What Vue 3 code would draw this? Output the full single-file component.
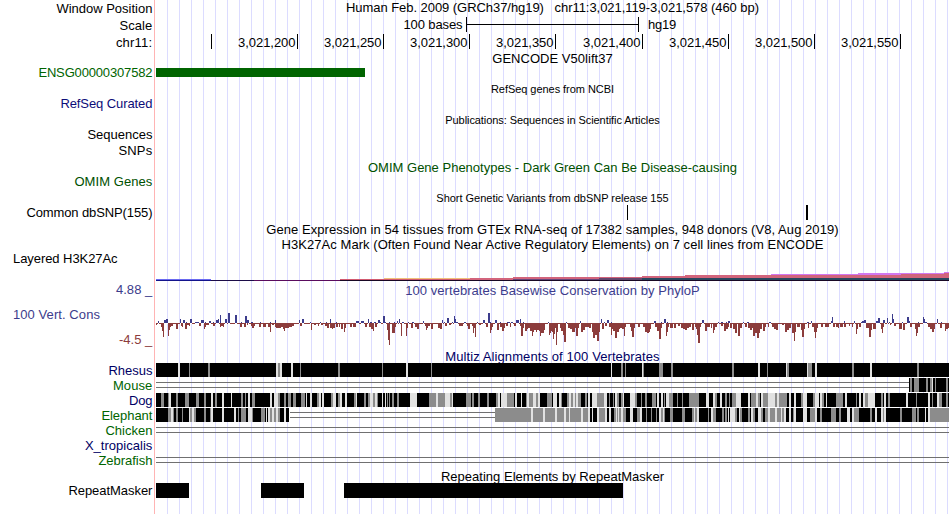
<template>
  <div class="browser">
    <div v-for="(row, i) in rows" :key="i" class="row" :style="{ height: row.h + 'px' }">

      <!-- Left labels -->
      <div class="side" :class="row.side">
        <span
          v-for="label in row.labels"
          :key="label.text"
          :style="{ color: label.color, letterSpacing: fit(label.text, label.w) }"
        >{{ label.text }}</span>
      </div>

      <!-- Track area -->
      <div class="plot">
        <div
          v-if="row.title"
          class="title"
          :class="{ small: row.small, low: row.low }"
          :style="{ color: row.color, letterSpacing: fit(row.title, row.w, row.small ? 11 : 13) }"
        >{{ row.title }}</div>

        <svg v-if="row.kind === 'scale'" width="793" height="17">
          <text x="306.5" y="12" text-anchor="end" :style="{ letterSpacing: fit('100 bases', 59) }">100 bases</text>
          <path d="M310 0h1v15h-1zM482 0h1v15h-1zM310 7h173v1h-173z" />
          <text x="492" y="12" :style="{ letterSpacing: fit('hg19', 28) }">hg19</text>
        </svg>

        <svg v-if="row.kind === 'ruler'" width="793" height="17">
          <g v-for="tick in ticks" :key="tick.x">
            <text
              v-if="tick.text"
              :x="tick.x - 1.5"
              y="13"
              text-anchor="end"
              :style="{ letterSpacing: fit(tick.text, 57.5) }"
            >{{ tick.text }}</text>
            <rect :x="tick.x" y="0" width="1" height="15" />
          </g>
        </svg>

        <svg v-if="row.kind === 'blocks'" width="793" :height="row.h">
          <rect
            v-for="b in row.blocks"
            :key="b[0]"
            :x="b[0]"
            :y="row.y"
            :width="b[1]"
            :height="row.size"
            :fill="row.fill"
          />
        </svg>

        <svg v-if="row.kind === 'layered'" width="793" height="31">
          <rect v-for="(s, n) in h3k27ac" :key="n" :x="s[0]" :y="s[1]" :width="s[2]" :height="s[3]" :fill="s[4]" />
        </svg>

        <svg v-if="row.kind === 'phylop'" width="793" height="51">
          <rect x="0" y="25" width="793" height="1" fill="#8c3c3c" />
          <rect v-for="b in conserved" :key="'u' + b[0]" :x="b[0]" :y="25 - b[2]" :width="b[1]" :height="b[2]" fill="#3c3c8c" />
          <rect v-for="b in conserved" :key="'z' + b[0]" :x="b[0]" y="25" :width="b[1]" height="1" fill="#fff" />
          <rect v-for="b in accelerated" :key="'d' + b[0]" :x="b[0]" y="25" :width="b[1]" :height="b[2] + 1" fill="#8c3c3c" />
        </svg>

        <svg v-if="row.kind === 'align'" width="793" height="15">
          <g v-for="g in row.gaps" :key="'g' + g[0]" fill="#707070">
            <rect :x="g[0]" y="4" :width="g[1]" height="1" />
            <rect :x="g[0]" y="9" :width="g[1]" height="1" />
          </g>
          <rect v-for="s in row.solid" :key="'s' + s[0]" :x="s[0]" y="0" :width="s[1]" height="14" :fill="s[2] || '#000'" />
          <rect v-for="s in row.stripes" :key="'p' + s.x" :x="s.x" y="0" :width="s.w" height="14" :fill="s.fill" />
        </svg>
      </div>
    </div>
  </div>
</template>

<script setup>
const GREEN = '#006400';
const OMIM = '#005000';
const NAVY = '#000064';
const BLUE = '#0c0c78';
const WIG_UP = '#3c3c8c';
const WIG_DOWN = '#8c3c3c';

// spread a string over a fixed pixel width
const ctx = document.createElement('canvas').getContext('2d');
const fit = (text, width, size = 13) => {
  if (!width) return 'normal';
  ctx.font = `${size}px "Liberation Sans"`;
  return ((width - ctx.measureText(text).width) / text.length).toFixed(3) + 'px';
};

const triples = (s) => s.trim().split(/\s+/).map((t) => t.split(',').map(Number));

// g = weak alignment, l = very weak alignment
const stripes = (s) => s.trim().split(/\s+/).map((t) => {
  const [x, w] = t.slice(1).split(',').map(Number);
  return { x, w, fill: t[0] === 'g' ? '#8c8c8c' : '#e1e1e1' };
});

const ticks = [
  { x: 55 },
  { x: 141, text: '3,021,200' },
  { x: 227, text: '3,021,250' },
  { x: 313, text: '3,021,300' },
  { x: 399, text: '3,021,350' },
  { x: 486, text: '3,021,400' },
  { x: 572, text: '3,021,450' },
  { x: 658, text: '3,021,500' },
  { x: 744, text: '3,021,550' }
];

// x, y, width, height, colour
const h3k27ac = [
  [0, 28, 55, 1, '#6a6af0'],
  [0, 29, 55, 1, '#14148c'],
  [55, 29, 43, 1, '#1c0c48'],
  [98, 29, 86, 1, '#5a0c5e'],
  [184, 28, 173, 1, '#d25a70'],
  [228, 27, 86, 1, '#f0c07c'],
  [314, 27, 43, 2, '#d2647c'],
  [357, 26, 129, 2, '#d2647c'],
  [357, 28, 86, 1, '#64467c'],
  [443, 27, 43, 2, '#64466e'],
  [486, 25, 43, 2, '#d2647c'],
  [529, 24, 264, 3, '#d2647c'],
  [486, 27, 307, 2, '#28465f'],
  [615, 23, 87, 1, '#d278f0'],
  [702, 22, 43, 2, '#d278f0'],
  [745, 22, 43, 1, '#d278f0'],
  [745, 23, 48, 1, '#d2647c'],
  [788, 21, 5, 1, '#d278f0'],
  [788, 22, 5, 1, '#d2647c'],
  [184, 29, 609, 1, '#180824']
];

// x, width, height
const conserved = triples(`
  2,1,2 8,2,3 10,2,4 24,1,4 27,2,3 30,1,1 34,2,4 39,4,1 45,3,3 49,1,1 53,2,2 57,1,1 60,2,3 62,1,4
  64,1,8 69,2,4 72,2,10 79,2,8 85,1,1 89,2,7 91,2,3 95,2,1 104,1,1 114,1,1 119,1,3 143,1,3 146,2,4
  154,1,1 164,1,1 170,1,1 174,1,4 180,1,1 200,3,2 205,3,2 212,1,4 214,2,1 218,2,1 222,2,3 224,1,1
  227,2,7 229,1,1 233,1,1 238,1,1 241,1,2 243,1,4 246,2,1 252,1,1 256,2,1
  267,1,2 286,1,3 288,1,1 291,2,5 296,1,1 298,1,7 299,1,4 300,2,1 308,2,1 321,1,1 327,2,3 332,2,10
  334,1,1 339,2,3 344,1,1 351,3,1 355,2,1 360,2,3 362,1,3 364,1,4 367,1,1 392,1,1 410,1,1 424,1,2
  445,1,4 448,1,1 451,2,3 455,1,1 498,2,2 505,1,1 508,2,4 511,1,1
  546,2,3 562,1,1 565,2,1 570,1,1 572,2,2 587,1,1 591,2,1 613,2,1 651,2,1 655,1,2 675,1,2 676,1,6
  688,1,2 698,1,2 705,1,1 706,2,2 708,2,3 720,2,2 722,2,5 727,2,3 731,1,5 733,1,1 736,1,9 737,1,4
  746,1,1 751,2,6 753,1,2 762,1,1 767,1,6 768,1,4 769,2,1 781,1,4 785,1,1
`);

const accelerated = triples(`
  0,1,1 5,1,3 6,1,7 7,1,13 12,1,12 13,1,6 14,1,3 15,2,2 20,2,5 25,1,2 26,1,3 29,2,5 31,2,1 33,1,2
  43,2,2 48,1,5 49,1,3 50,3,1 57,2,2 64,1,3 65,2,2 67,1,3 84,2,3 88,2,3 91,1,1 95,1,2 96,2,4 98,1,2
  103,2,3 107,3,3 112,2,3 114,1,8 116,2,1 119,1,3 120,5,4 125,2,3 127,1,5 128,1,7 129,4,4 133,3,3
  136,2,2 144,2,2 155,1,6 158,2,1 162,1,2 165,2,1 169,2,2 171,2,4 174,2,4 176,1,5 177,2,4 180,2,3
  183,1,3 185,2,5 188,1,8 189,1,4 194,2,3 197,3,3 209,2,3 213,2,3 215,2,5 217,1,7 219,2,3
  231,1,6 232,1,16 233,1,21 236,1,9 237,2,9 239,1,3 245,1,12 250,1,12 251,1,4 255,2,4 259,2,3 261,2,5
  269,1,2 270,1,6 271,1,4 272,2,2 275,2,5 282,2,4 284,2,5 289,2,2 293,2,1 303,4,2 311,1,2 312,2,5
  316,1,2 317,1,9 318,1,4 319,1,13 323,2,1 330,2,3 334,1,9 335,1,6 336,1,3 341,2,6 344,2,3 346,2,7
  348,1,4 350,2,2 354,1,3 358,2,2 364,1,2 365,2,12 367,1,4 369,2,7 371,1,5 372,2,4 374,2,7 376,1,12
  377,1,8 378,2,6 380,1,8 381,2,6 383,1,7 384,1,12 385,1,9 386,2,9 388,1,6 393,1,11 394,1,9 395,1,7
  396,1,8 397,1,15 398,1,10 399,1,4 400,1,21 401,1,8 404,1,4 405,2,7 407,1,11 408,2,18 412,2,4
  414,2,5 416,3,8 419,1,4 420,2,12 422,1,4 425,2,8 427,2,6 429,2,3 431,2,3 433,2,4 436,1,8 437,2,14
  439,2,11 441,2,17 443,1,8 446,2,5 449,2,2 453,2,3 455,1,11 456,1,5 457,2,7 459,2,14 461,2,8 463,1,5
  464,2,4 466,2,5 468,1,12 469,1,3 474,1,3 475,1,7 476,2,13 478,1,4 482,2,3 487,2,3 489,2,8 491,2,9
  493,1,8 494,1,5 499,2,3 501,2,7 503,2,15 505,1,4 510,1,12 511,1,8 512,1,3 514,3,4 518,2,4 522,2,2
  525,2,4 527,2,5 529,2,6 531,2,4 533,2,3 536,2,6 539,1,3 540,1,5 541,1,11 542,2,19 544,1,3
  549,2,7 551,3,3 555,1,4 557,1,9 558,1,6 559,2,3 565,2,2 568,2,7 570,2,5 572,1,3 574,2,4 577,2,5
  579,2,9 582,2,12 584,2,4 589,2,3 592,2,4 594,2,6 596,1,4 597,2,12 599,2,9 601,2,14 603,1,9 604,1,5
  605,1,5 607,2,7 609,1,3 612,1,3 616,2,3 618,2,5 620,2,6 626,2,1 629,2,8 631,2,6 633,2,4 636,2,9
  638,1,17 639,1,8 641,3,3 645,1,6 646,2,13 648,1,5 652,1,4 656,2,3 658,1,8 659,1,14 660,1,8 661,1,4
  665,2,3 669,2,3 671,2,3 677,2,3 680,2,3 682,1,4 684,3,3 688,2,3 693,1,2 696,1,3 700,1,10 701,1,5
  703,2,3 710,3,4 713,2,13 715,1,6 717,3,5 725,1,5 726,1,9 727,1,3 734,1,1 738,2,2 743,3,5 747,2,6
  754,2,3 759,1,5 760,1,12 761,1,9 762,2,3 772,2,3 774,2,5 776,2,8 778,1,5 784,2,4 789,1,7 790,2,5
  792,1,4
`);

const rhesus = stripes(`
  l22,2 g33,1 g52,2 l120,2 g122,2 l124,2 l135,2 g144,1 g182,2 g226,1 l250,2 g275,1 l455,1 g465,2 g469,1
  l486,1 g487,1 g503,4 g515,2 g576,2 l602,2 g611,1 l630,1 g631,2 l651,1 g652,4 l659,2 g696,2 l714,2 g761,2
`);

const mouse = stripes('g754,2 g758,5 g770,2 g774,2 l776,1 g779,1 g790,2');

const dog = stripes(`
  g5,3 g12,1 l13,2 g20,2 g29,4 g40,3 g48,2 l55,2 g59,2 l66,2 l75,1 g85,2 g89,1 l92,2 g96,3 l114,2 l118,4
  g122,2 g128,2 g132,3 g137,3 g145,4 l150,1 l154,2 g161,2 l163,2 l166,2 g175,2 l177,3 g182,2 l184,2 l189,2
  g198,2 l200,1 g208,2 g212,2 l214,3 g217,2 l219,2 g221,1 l226,1 l229,1 g231,1 g233,1 g236,2 g241,2 l254,7
  g273,7 l280,2 g282,7 l289,5 g294,2 l296,1 g310,5 g316,2 g322,2 g331,2 g340,2 l342,2 l345,6 g351,7 l359,2
  l365,1 g370,1 l371,2 g373,4 l377,3 g380,2 l382,2 g391,3 g394,2 l397,4 l403,2 g405,1 g411,2 l413,2 g415,2
  l417,2 g419,1 l420,2 g422,3 g429,2 l432,2 l436,5 g441,3 g444,4 l448,3 g453,1 g457,1 l459,2 g461,2 g465,2
  l467,1 l474,5 g479,2 g485,1 g489,2 g496,4 l501,2 l505,2 g508,1 l510,3 g513,4 g521,1 g526,1 g533,10 l550,3
  l557,2 g559,2 l564,2 g569,2 g573,1 g576,4 l580,5 l592,2 g595,5 l600,2 g602,2 l605,2 g607,5 l612,7 g619,2
  l621,2 g623,8 l633,2 l638,2 g645,2 l647,4 g657,2 l659,4 l664,2 g666,2 l670,1 g680,7 l689,2 g700,1 l703,2
  l707,2 g709,3 l712,7 g725,2 l728,2 g732,2 l750,2 g760,1 l772,2 g776,1 l781,2 g783,3 g790,2
`);

const elephant = stripes(`
  g12,3 l15,2 g17,1 g20,2 g26,1 l33,1 g34,2 l36,2 g38,2 g48,2 g54,1 l55,2 l66,2 l78,2 g82,1 g85,5 l92,4
  g96,1 g105,4 l110,1 l112,2 g114,2 l116,2 g118,2 l120,2 g122,2 l128,2 l375,2 l387,2 l399,2 l408,2 l413,1
  l425,2 l432,2 l436,1 l441,2 g443,6 l449,2 l453,2 g458,2 l460,1 g461,1 l462,1 g463,2 l465,2 g467,3 l474,3
  g481,3 l484,2 g490,1 g495,1 g500,1 l503,2 g505,2 l507,1 g508,1 g514,3 g526,3 g536,2 l538,1 g539,2 l541,2
  g552,1 l555,2 g557,3 g566,2 g569,2 l572,1 l574,5 g579,2 l583,1 g584,2 g592,2 l595,2 g597,2 l602,3 g605,2
  g609,3 l612,2 g614,5 l619,2 g621,4 l625,1 g626,2 l628,2 l633,2 g637,1 l638,2 l647,4 g654,5 l659,2 g664,2
  g675,5 g683,2 l691,3 l696,2 g698,5 g714,2 l719,2 l725,2 g727,1 l728,2 g744,2 g756,4 g761,2 l769,1 l772,2
`);

const label = (text, w, color = '#000') => ({ text, w, color });

const rows = [
  { h: 17, side: 'drop', labels: [label('Window Position', 96)], title: 'Human Feb. 2009 (GRCh37/hg19)\u00a0\u00a0\u00a0chr11:3,021,119-3,021,578 (460 bp)', w: 413 },
  { h: 17, side: 'drop', labels: [label('Scale', 33)], kind: 'scale' },
  { h: 17, side: 'drop', labels: [label('chr11:', 36.5)], kind: 'ruler' },
  { h: 14, title: 'GENCODE V50lift37', w: 120.5 },
  { h: 16, labels: [label('ENSG00000307582', 114, GREEN)], kind: 'blocks', blocks: [[0, 209]], y: 3, size: 9, fill: GREEN },
  { h: 15, title: 'RefSeq genes from NCBI', w: 123, small: true, low: true },
  { h: 16, labels: [label('RefSeq Curated', 92, BLUE)] },
  { h: 15, title: 'Publications: Sequences in Scientific Articles', w: 215, small: true, low: true },
  { h: 16, labels: [label('Sequences', 65)] },
  { h: 17, labels: [label('SNPs', 34)] },
  { h: 14, title: 'OMIM Gene Phenotypes - Dark Green Can Be Disease-causing', w: 369, color: OMIM },
  { h: 17, labels: [label('OMIM Genes', 78, OMIM)] },
  { h: 14, title: 'Short Genetic Variants from dbSNP release 155', w: 232.5, small: true },
  { h: 17, labels: [label('Common dbSNP(155)', 126)], kind: 'blocks', blocks: [[471, 1], [650, 2]], y: 0, size: 15, fill: '#000' },
  { h: 15, title: 'Gene Expression in 54 tissues from GTEx RNA-seq of 17382 samples, 948 donors (V8, Aug 2019)', w: 573 },
  { h: 14, title: 'H3K27Ac Mark (Often Found Near Active Regulatory Elements) on 7 cell lines from ENCODE', w: 542.5 },
  { h: 31, side: 'left', labels: [label('Layered H3K27Ac', 104.5)], kind: 'layered' },
  {
    h: 67,
    side: 'range',
    labels: [label('4.88 _', 36.5, WIG_UP), label('100 Vert. Cons', 87, WIG_UP), label('-4.5 _', 33.5, WIG_DOWN)],
    title: '100 vertebrates Basewise Conservation by PhyloP',
    w: 294.5,
    color: WIG_UP,
    low: true,
    kind: 'phylop'
  },
  { h: 14, title: 'Multiz Alignments of 100 Vertebrates', w: 215, color: NAVY },
  { h: 15, labels: [label('Rhesus', 44, NAVY)], kind: 'align', solid: [[0, 793]], stripes: rhesus },
  { h: 15, labels: [label('Mouse', 39.5, GREEN)], kind: 'align', gaps: [[0, 753]], solid: [[753, 40]], stripes: mouse },
  { h: 15, labels: [label('Dog', 23.5, NAVY)], kind: 'align', solid: [[0, 793]], stripes: dog },
  {
    h: 15,
    labels: [label('Elephant', 51, GREEN)],
    kind: 'align',
    gaps: [[134, 205]],
    solid: [[0, 133], [339, 93, '#8c8c8c'], [432, 342], [774, 19, '#8c8c8c']],
    stripes: elephant
  },
  { h: 15, labels: [label('Chicken', 47, GREEN)], kind: 'align', gaps: [[0, 793]] },
  { h: 15, labels: [label('X_tropicalis', 67.5, NAVY)] },
  { h: 16, labels: [label('Zebrafish', 54, GREEN)], kind: 'align', gaps: [[0, 793]] },
  { h: 14, title: 'Repeating Elements by RepeatMasker', w: 223 },
  { h: 31, labels: [label('RepeatMasker', 84, '#000')], kind: 'blocks', blocks: [[0, 33], [105, 43], [188, 279]], y: 0, size: 15, fill: '#000' }
];
</script>

<style>
body {
  margin: 0;
  background: #fff;
}
</style>

<style scoped>
.browser {
  width: 949px;
  height: 514px;
  overflow: hidden;
  background: linear-gradient(#ffb4b4, #ffb4b4) 154px 0 / 1px 100% no-repeat;
  font: 13px/15px "Liberation Sans", Arial, sans-serif;
  color: #000;
}

.row {
  display: grid;
  grid-template-columns: 152.4px 793px;
  column-gap: 3.6px;
}

/* Labels */
.side {
  display: flex;
  flex-direction: column;
  align-items: flex-end;
  white-space: pre;
}
.side.drop { padding-top: 1px; }
.side.left { align-items: flex-start; padding-left: 13px; }
.side.range { gap: 10px; }
.side.range span:nth-child(2) { align-self: flex-start; padding-left: 13px; }

/* Tracks */
.plot {
  background: linear-gradient(90deg, #dcdcff 1px, transparent 1px) 11px 0 / 12px 100%;
}
.plot svg {
  display: block;
  font-size: 13px;
}

.title {
  text-align: center;
  white-space: pre;
}
.title.small { font-size: 11px; }
.title.low { padding-top: 1px; }
</style>
